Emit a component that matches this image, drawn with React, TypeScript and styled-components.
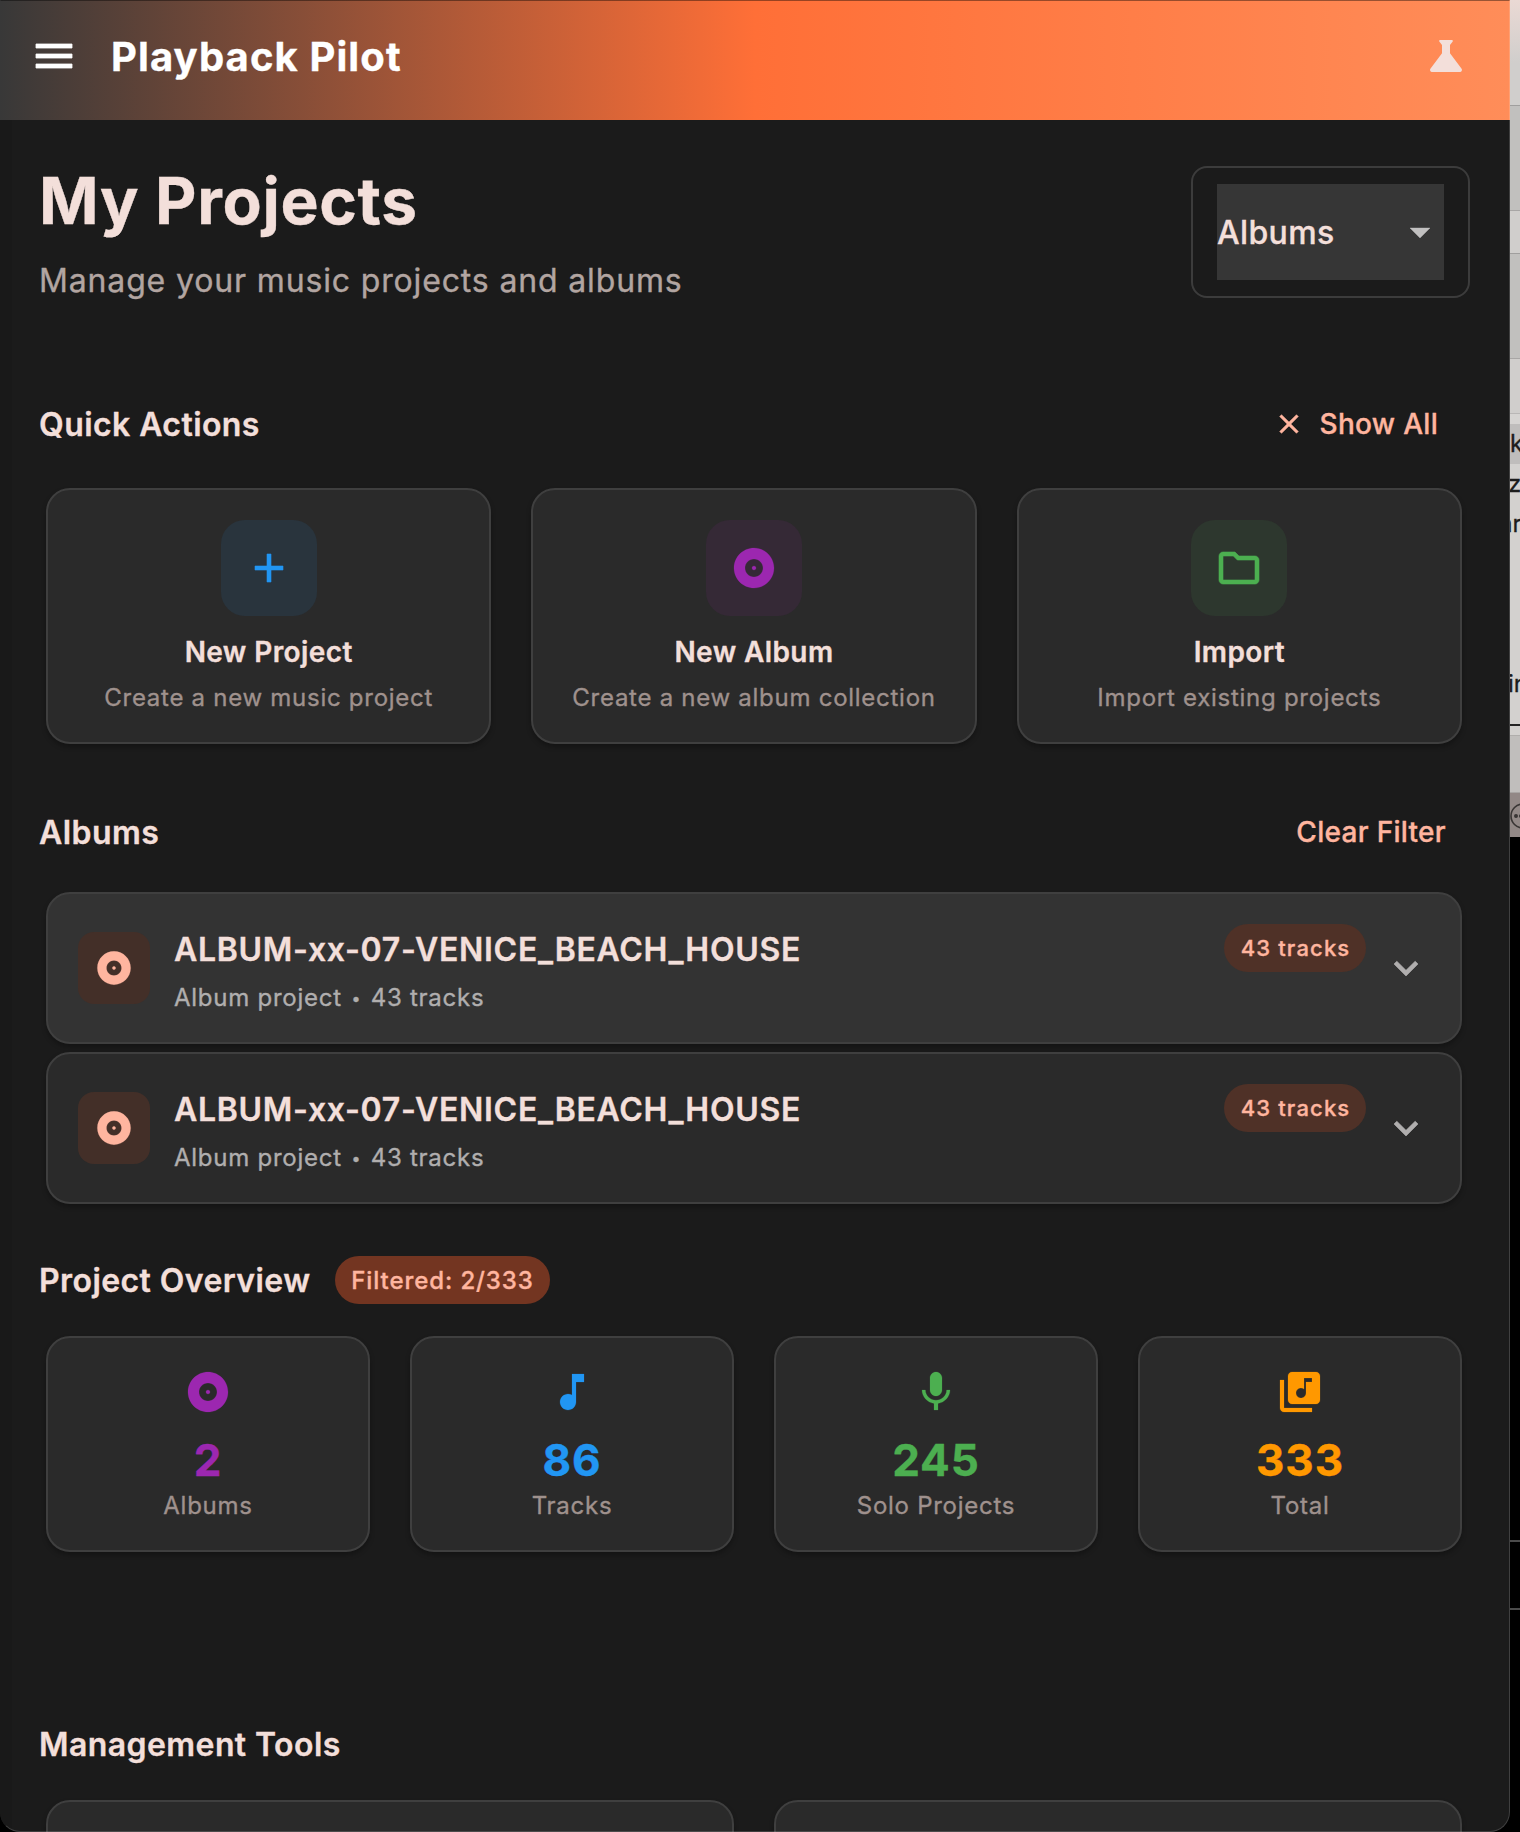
import React from "react";
import styled, { createGlobalStyle } from "styled-components";

const Global = createGlobalStyle`
  *{box-sizing:border-box}
  html,body{margin:0;padding:0;background:#000}
  body{width:1520px;height:1832px;overflow:hidden;font-family:Inter,"Liberation Sans",sans-serif;color:#f3dfda;-webkit-text-stroke:0.35px currentColor}
  h1,h2,h3,p{margin:0}
  button{font:inherit;border:0;background:none;padding:0;color:inherit}
  svg{display:block;flex:none}
`;

const Desktop = styled.div`
  display: flex;
  width: 1520px;
  height: 1832px;
  background: #000;
  overflow: hidden;
`;
const Window = styled.div`
  position: relative;
  display: flex;
  flex-direction: column;
  width: 1510px;
  height: 1832px;
  flex: none;
  overflow: hidden;
  background: #1b1b1b;
  border-radius: 0 0 20px 20px;
  &::after {
    content: "";
    position: absolute;
    inset: 0;
    border: 1px solid rgba(255, 255, 255, 0.16);
    border-top-color: rgba(0, 0, 0, 0.4);
    border-left-color: transparent;
    border-radius: 0 0 20px 20px;
    pointer-events: none;
  }
`;
const Header = styled.header`
  display: flex;
  align-items: center;
  flex: none;
  height: 120px;
  padding: 0 40px 8px 30px;
  background: linear-gradient(90deg, #383838 0%, #ff6f37 50%, #ff8d59 100%);
`;
const Brand = styled.span`
  flex: 1;
  margin-left: 33px;
  padding-top: 2px;
  color: #fff;
  font-size: 40px;
  line-height: 48px;
  font-weight: 700;
  letter-spacing: 1.1px;
`;
const Main = styled.main`
  display: flex;
  flex-direction: column;
  flex: 1;
  min-height: 0;
  padding: 46px 48px 0 39px;
  background: linear-gradient(90deg, #191919 12px, #1b1b1b 12px);
`;
const Intro = styled.section`
  display: flex;
  justify-content: space-between;
  height: 132px;
  margin-right: -8px;
  flex: none;
`;
const Title = styled.h1`
  margin-top: -1px;
  font-size: 64px;
  line-height: 72px;
  font-weight: 700;
  letter-spacing: 0.7px;
`;
const Subtitle = styled.p`
  margin-top: 24px;
  color: #b2a5a1;
  font-size: 32px;
  line-height: 40px;
  letter-spacing: 0.85px;
`;
const Select = styled.div`
  width: 279px;
  height: 132px;
  padding: 16px 24px;
  border: 2px solid #3c3c3c;
  border-radius: 16px;
`;
const SelectValue = styled.button`
  display: flex;
  align-items: center;
  justify-content: space-between;
  width: 227px;
  height: 96px;
  background: #363636;
  font-size: 32px;
  font-weight: 550;
  line-height: 40px;
  letter-spacing: 0.35px;
`;
const SelectText = styled.span`
  padding-top: 2px;
`;
const SectionHead = styled.div<{ $top: number }>`
  display: flex;
  align-items: center;
  gap: 24px;
  height: 48px;
  flex: none;
  margin-top: ${(p) => p.$top}px;
`;
const Heading = styled.h2`
  padding-top: 2px;
  font-size: 32px;
  line-height: 48px;
  font-weight: 600;
  letter-spacing: 0.42px;
`;
const TextButton = styled.button<{ $right: number }>`
  display: flex;
  align-items: center;
  gap: 15px;
  margin-left: auto;
  margin-right: ${(p) => p.$right}px;
  color: #ffb59f;
  font-size: 28px;
  line-height: 40px;
  font-weight: 540;
  letter-spacing: 0.3px;
`;
const Grid = styled.div<{ $cols: number; $top: number }>`
  display: grid;
  flex: none;
  grid-template-columns: repeat(${(p) => p.$cols}, 1fr);
  gap: 40px;
  margin: ${(p) => p.$top}px 0 0 7px;
`;
const Card = styled.div<{ $h: number; $hover?: boolean }>`
  display: flex;
  height: ${(p) => p.$h}px;
  border: 2px solid #3f3f3f;
  border-radius: 24px;
  background: ${(p) => (p.$hover ? "#333333" : "#2a2a2a")};
  box-shadow: 0 3px 5px rgba(0, 0, 0, 0.28);
`;
const CenterCard = styled(Card)`
  flex-direction: column;
  align-items: center;
  padding-top: 30px;
`;
const Tile = styled.div<{ $size: number; $r: number; $bg: string; $fg: string }>`
  display: flex;
  align-items: center;
  justify-content: center;
  flex: none;
  width: ${(p) => p.$size}px;
  height: ${(p) => p.$size}px;
  border-radius: ${(p) => p.$r}px;
  background: ${(p) => p.$bg};
  color: ${(p) => p.$fg};
`;
const ActionTitle = styled.h3`
  margin-top: 16px;
  font-size: 28px;
  line-height: 40px;
  font-weight: 600;
  letter-spacing: 0.4px;
`;
const Caption = styled.p<{ $top: number }>`
  margin-top: ${(p) => p.$top}px;
  color: #9f918d;
  font-size: 24px;
  line-height: 32px;
  letter-spacing: 0.73px;
`;
const AlbumList = styled.div`
  display: flex;
  flex-direction: column;
  flex: none;
  gap: 8px;
  margin: 36px 0 0 7px;
`;
const AlbumCard = styled(Card)`
  align-items: center;
  padding: 0 30px;
`;
const AlbumText = styled.div`
  flex: 1;
  margin-left: 24px;
  padding-top: 3px;
`;
const AlbumName = styled.h3`
  font-size: 32px;
  line-height: 48px;
  font-weight: 600;
  letter-spacing: 0.7px;
`;
const AlbumMeta = styled.p`
  margin-top: 8px;
  color: #b0aeae;
  font-size: 24px;
  line-height: 32px;
  letter-spacing: 0.75px;
`;
const Dot = styled.span`
  margin: 0 2px;
  font-size: 16px;
  vertical-align: 2px;
`;
const Pill = styled.span<{ $w: number; $bg: string; $fs: number; $ls: number }>`
  display: flex;
  align-items: center;
  justify-content: center;
  width: ${(p) => p.$w}px;
  height: 48px;
  padding-left: 1px;
  border-radius: 24px;
  background: ${(p) => p.$bg};
  color: #ffb59f;
  font-size: ${(p) => p.$fs}px;
  font-weight: 540;
  letter-spacing: ${(p) => p.$ls}px;
`;
const Count = styled.div`
  align-self: flex-start;
  margin: 30px 16px 0 0;
`;
const StatValue = styled.strong<{ $c: string }>`
  margin-top: 16px;
  color: ${(p) => p.$c};
  font-size: 44px;
  line-height: 56px;
  font-weight: 700;
  letter-spacing: 0.9px;
`;

const Backdrop = styled.aside`
  display: flex;
  flex-direction: column;
  width: 10px;
  height: 1832px;
  overflow: hidden;
  color: #1c1c1c;
`;
const Band = styled.div<{ $h: number; $bg: string; $line?: string }>`
  height: ${(p) => p.$h}px;
  flex: none;
  overflow: hidden;
  background: ${(p) => p.$bg};
  border-bottom: ${(p) => (p.$line ? `1px solid ${p.$line}` : "0")};
`;
const FileRow = styled.div<{ $selected?: boolean; $indent: number }>`
  height: 40px;
  flex: none;
  overflow: hidden;
  background: ${(p) => (p.$selected ? "#bfbdbc" : "#d3d1cf")};
  font-size: 24px;
  line-height: 40px;
  white-space: nowrap;
  text-indent: ${(p) => p.$indent}px;
`;
const Rule = styled.div<{ $top: number }>`
  height: 2px;
  flex: none;
  margin-top: ${(p) => p.$top}px;
  background: #4b4b4b;
`;
const Badge = styled.svg`
  margin-top: 10px;
`;

type IconProps = { d: string; size?: number; color?: string; weight?: number };
const Icon = ({ d, size = 48, color = "currentColor", weight = 0 }: IconProps) => (
  <svg width={size} height={size} viewBox="0 0 24 24" fill={color} stroke={color} strokeWidth={weight}>
    <path d={d} />
  </svg>
);

const paths = {
  menu: "M3 18h18v-2H3v2zm0-5h18v-2H3v2zm0-7v2h18V6H3z",
  science: "M19.8 18.4L14 10.67V6.5l1.35-1.69c.26-.33.03-.81-.39-.81H9.04c-.42 0-.65.48-.39.81L10 6.5v4.17L4.2 18.4c-.49.66-.02 1.6.8 1.6h14c.82 0 1.29-.94.8-1.6z",
  drop: "M7 10l5 5 5-5z",
  close: "M19 6.41L17.59 5 12 10.59 6.41 5 5 6.41 10.59 12 5 17.59 6.41 19 12 13.41 17.59 19 19 17.59 13.41 12z",
  add: "M19 13h-6v6h-2v-6H5v-2h6V5h2v6h6v2z",
  album: "M12 2C6.48 2 2 6.48 2 12s4.48 10 10 10 10-4.48 10-10S17.52 2 12 2zm0 14.5c-2.49 0-4.5-2.01-4.5-4.5S9.51 7.5 12 7.5s4.5 2.01 4.5 4.5-2.01 4.5-4.5 4.5zm0-5.5c-.55 0-1 .45-1 1s.45 1 1 1 1-.45 1-1-.45-1-1-1z",
  folder: "M9.17 6l2 2H20v10H4V6h5.17M10 4H4c-1.1 0-1.99.9-1.99 2L2 18c0 1.1.9 2 2 2h16c1.1 0 2-.9 2-2V8c0-1.1-.9-2-2-2h-8l-2-2z",
  more: "M16.59 8.59L12 13.17 7.41 8.59 6 10l6 6 6-6z",
  note: "M12 3v10.55c-.59-.34-1.27-.55-2-.55-2.21 0-4 1.79-4 4s1.79 4 4 4 4-1.79 4-4V7h4V3h-6z",
  mic: "M12 14c1.66 0 2.99-1.34 2.99-3L15 5c0-1.66-1.34-3-3-3S9 3.34 9 5v6c0 1.66 1.34 3 3 3zm5.3-3c0 3-2.54 5.1-5.3 5.1S6.7 14 6.7 11H5c0 3.41 2.72 6.23 6 6.72V21h2v-3.28c3.28-.48 6-3.3 6-6.72h-1.7z",
  library: "M20 2H8c-1.1 0-2 .9-2 2v12c0 1.1.9 2 2 2h12c1.1 0 2-.9 2-2V4c0-1.1-.9-2-2-2zm-2 5h-3v5.5c0 1.38-1.12 2.5-2.5 2.5S10 13.88 10 12.5s1.12-2.5 2.5-2.5c.57 0 1.08.19 1.5.51V5h4v2zM4 6H2v14c0 1.1.9 2 2 2h14v-2H4V6z",
};

const actions = [
  { icon: paths.add, bg: "#29343d", fg: "#2196f3", title: "New Project", text: "Create a new music project", weight: 0.3 },
  { icon: paths.album, bg: "#352936", fg: "#9c27b0", title: "New Album", text: "Create a new album collection", weight: 0.1 },
  { icon: paths.folder, bg: "#2d372e", fg: "#4caf50", title: "Import", text: "Import existing projects", weight: 0.3 },
];
const stats = [
  { icon: paths.album, color: "#9c27b0", value: "2", label: "Albums" },
  { icon: paths.note, color: "#2196f3", value: "86", label: "Tracks" },
  { icon: paths.mic, color: "#4caf50", value: "245", label: "Solo Projects" },
  { icon: paths.library, color: "#ff9800", value: "333", label: "Total" },
];

export default function App() {
  return (
    <Desktop>
      <Global />
      <Window>
        <Header>
          <Icon d={paths.menu} color="#fff" weight={0.4} />
          <Brand>Playback Pilot</Brand>
          <Icon d={paths.science} color="#f3dfda" />
        </Header>
        <Main>
          <Intro>
            <div>
              <Title>My Projects</Title>
              <Subtitle>Manage your music projects and albums</Subtitle>
            </div>
            <Select>
              <SelectValue>
                <SelectText>Albums</SelectText>
                <Icon d={paths.drop} color="#c1c0c0" weight={0.2} />
              </SelectValue>
            </Select>
          </Intro>
          <SectionHead $top={102}>
            <Heading>Quick Actions</Heading>
            <TextButton $right={24}>
              <Icon d={paths.close} size={32} weight={0.4} />
              Show All
            </TextButton>
          </SectionHead>
          <Grid $cols={3} $top={40}>
            {actions.map((a) => (
              <CenterCard key={a.title} $h={256}>
                <Tile $size={96} $r={24} $bg={a.bg} $fg={a.fg}>
                  <Icon d={a.icon} weight={a.weight} />
                </Tile>
                <ActionTitle>{a.title}</ActionTitle>
                <Caption $top={10}>{a.text}</Caption>
              </CenterCard>
            ))}
          </Grid>
          <SectionHead $top={64}>
            <Heading>Albums</Heading>
            <TextButton $right={16}>Clear Filter</TextButton>
          </SectionHead>
          <AlbumList>
            {[true, false].map((hover, i) => (
              <AlbumCard key={i} $h={152} $hover={hover}>
                <Tile $size={72} $r={16} $bg="#432f28" $fg="#ffb59f">
                  <Icon d={paths.album} size={40} weight={0.1} />
                </Tile>
                <AlbumText>
                  <AlbumName>ALBUM-xx-07-VENICE_BEACH_HOUSE</AlbumName>
                  <AlbumMeta>
                    Album project <Dot>•</Dot> 43 tracks
                  </AlbumMeta>
                </AlbumText>
                <Count>
                  <Pill $w={142} $bg="#4f3127" $fs={22} $ls={1.15}>43 tracks</Pill>
                </Count>
                <Icon d={paths.more} color="#b0aeae" weight={0.3} />
              </AlbumCard>
            ))}
          </AlbumList>
          <SectionHead $top={52}>
            <Heading>Project Overview</Heading>
            <Pill $w={215} $bg="#733521" $fs={24} $ls={0.9}>Filtered: 2/333</Pill>
          </SectionHead>
          <Grid $cols={4} $top={32}>
            {stats.map((s) => (
              <CenterCard key={s.label} $h={216}>
                <Icon d={s.icon} color={s.color} weight={0.1} />
                <StatValue $c={s.color}>{s.value}</StatValue>
                <Caption $top={2}>{s.label}</Caption>
              </CenterCard>
            ))}
          </Grid>
          <SectionHead $top={168}>
            <Heading>Management Tools</Heading>
          </SectionHead>
          <Grid $cols={2} $top={32}>
            <Card $h={216} />
            <Card $h={216} />
          </Grid>
        </Main>
      </Window>
      <Backdrop>
        <Band $h={106} $bg="linear-gradient(#ead9d4, #d0cecc 60%)" $line="#a09f9e" />
        <Band $h={105} $bg="#c1c0be" $line="#a8a6a5" />
        <Band $h={43} $bg="#d0cecc" $line="#a09f9e" />
        <Band $h={105} $bg="#c1c0be" $line="#a8a6a5" />
        <Band $h={55} $bg="#d0cecc" $line="#b9b7b6" />
        <Band $h={10} $bg="#d6d4d2" />
        <FileRow $selected $indent={0}>k</FileRow>
        <FileRow $indent={-2}>z</FileRow>
        <FileRow $indent={-11}>ar</FileRow>
        <Band $h={120} $bg="#d3d1cf" />
        <FileRow $indent={-2}>in</FileRow>
        <Band $h={32} $bg="linear-gradient(#d3d1cf 20px, #242424 20px, #242424 22px, #d3d1cf 22px)" $line="#b0aeac" />
        <Band $h={57} $bg="#c0bebc" $line="#a8a5a3" />
        <Band $h={44} $bg="#928886">
          <Badge width="26" height="26" viewBox="0 0 26 26" fill="none" stroke="#3a3635" strokeWidth="1.6">
            <circle cx="13" cy="13" r="12" />
            <circle cx="6" cy="13" r="1.2" fill="#3a3635" />
            <circle cx="11" cy="13" r="1.2" fill="#3a3635" />
          </Badge>
        </Band>
        <Rule $top={703} />
        <Rule $top={66} />
      </Backdrop>
    </Desktop>
  );
}
